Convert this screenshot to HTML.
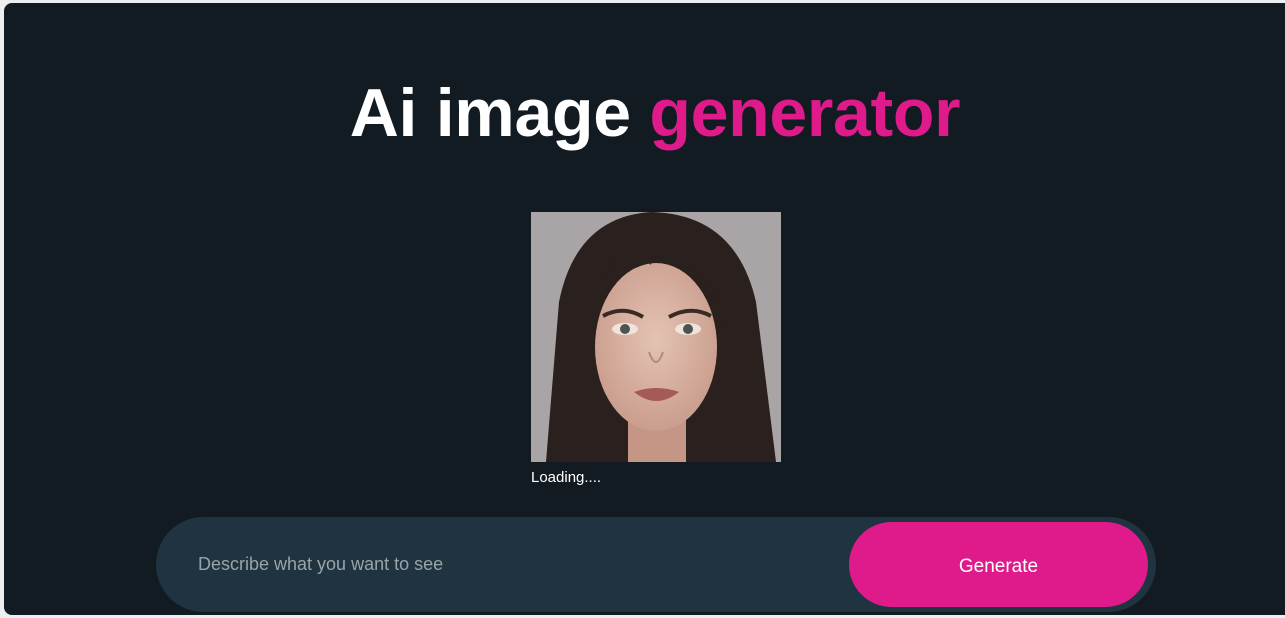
<!DOCTYPE html>
<html><head><meta charset="utf-8"><style>
html,body{margin:0;padding:0;background:#eceeef;width:1285px;height:618px;overflow:hidden;font-family:"Liberation Sans","DejaVu Sans",sans-serif}
.c{position:absolute;left:4px;top:3px;width:1290px;height:612px;background:#121b22;border-radius:8px}
h1{position:absolute;left:0;top:74px;width:1310px;text-align:center;margin:0;font-size:68px;font-weight:600;color:#fff;letter-spacing:-0.3px}
h1 span{color:#df1b8b}
.img{position:absolute;left:531px;top:212px;width:250px;height:250px}
.load{position:absolute;left:531px;top:469px;color:#fff;font-size:15px}
.bar{position:absolute;left:156px;top:517px;width:1000px;height:95px;border-radius:48px;background:#1f3440}
.ph{position:absolute;left:198px;top:554px;color:#9aa3a8;font-size:18px}
.btn{position:absolute;left:849px;top:522px;width:299px;height:85px;border-radius:43px;background:#df1b8b;color:#fff;font-size:19px;text-align:center;line-height:90px}
</style></head><body>
<div class="c"></div>
<h1>Ai image <span>generator</span></h1>
<svg class="img" viewBox="0 0 250 250">
<defs>
<radialGradient id="sk" cx="50%" cy="45%" r="60%"><stop offset="0" stop-color="#e4c3b4"/><stop offset="1" stop-color="#c89a8a"/></radialGradient>
</defs>
<rect width="250" height="250" fill="#a9a4a5"/>
<path d="M15 250 L28 90 Q45 5 120 0 Q205 2 225 90 L245 250 Z" fill="#2a201d"/>
<rect x="97" y="200" width="58" height="50" fill="#c59686"/>
<ellipse cx="125" cy="135" rx="61" ry="84" fill="url(#sk)"/>
<path d="M62 120 Q62 40 118 35 Q122 60 118 50 Q190 40 190 120 Q185 60 150 55 Q125 45 100 58 Q70 70 62 120Z" fill="#2a201d"/>
<path d="M72 104 Q92 93 112 105" stroke="#3a2a25" stroke-width="4" fill="none"/>
<path d="M138 105 Q160 93 180 104" stroke="#3a2a25" stroke-width="4" fill="none"/>
<ellipse cx="94" cy="117" rx="13" ry="6" fill="#f0e2dc"/><circle cx="94" cy="117" r="5" fill="#4a5550"/>
<ellipse cx="157" cy="117" rx="13" ry="6" fill="#f0e2dc"/><circle cx="157" cy="117" r="5" fill="#4a5550"/>
<path d="M103 180 Q125 172 148 180 Q125 198 103 180Z" fill="#a55a58"/>
<path d="M118 140 Q125 160 132 140" stroke="#b88a7c" stroke-width="2" fill="none"/>
</svg>
<div class="load">Loading....</div>
<div class="bar"></div>
<div class="ph">Describe what you want to see</div>
<div class="btn">Generate</div>
</body></html>
